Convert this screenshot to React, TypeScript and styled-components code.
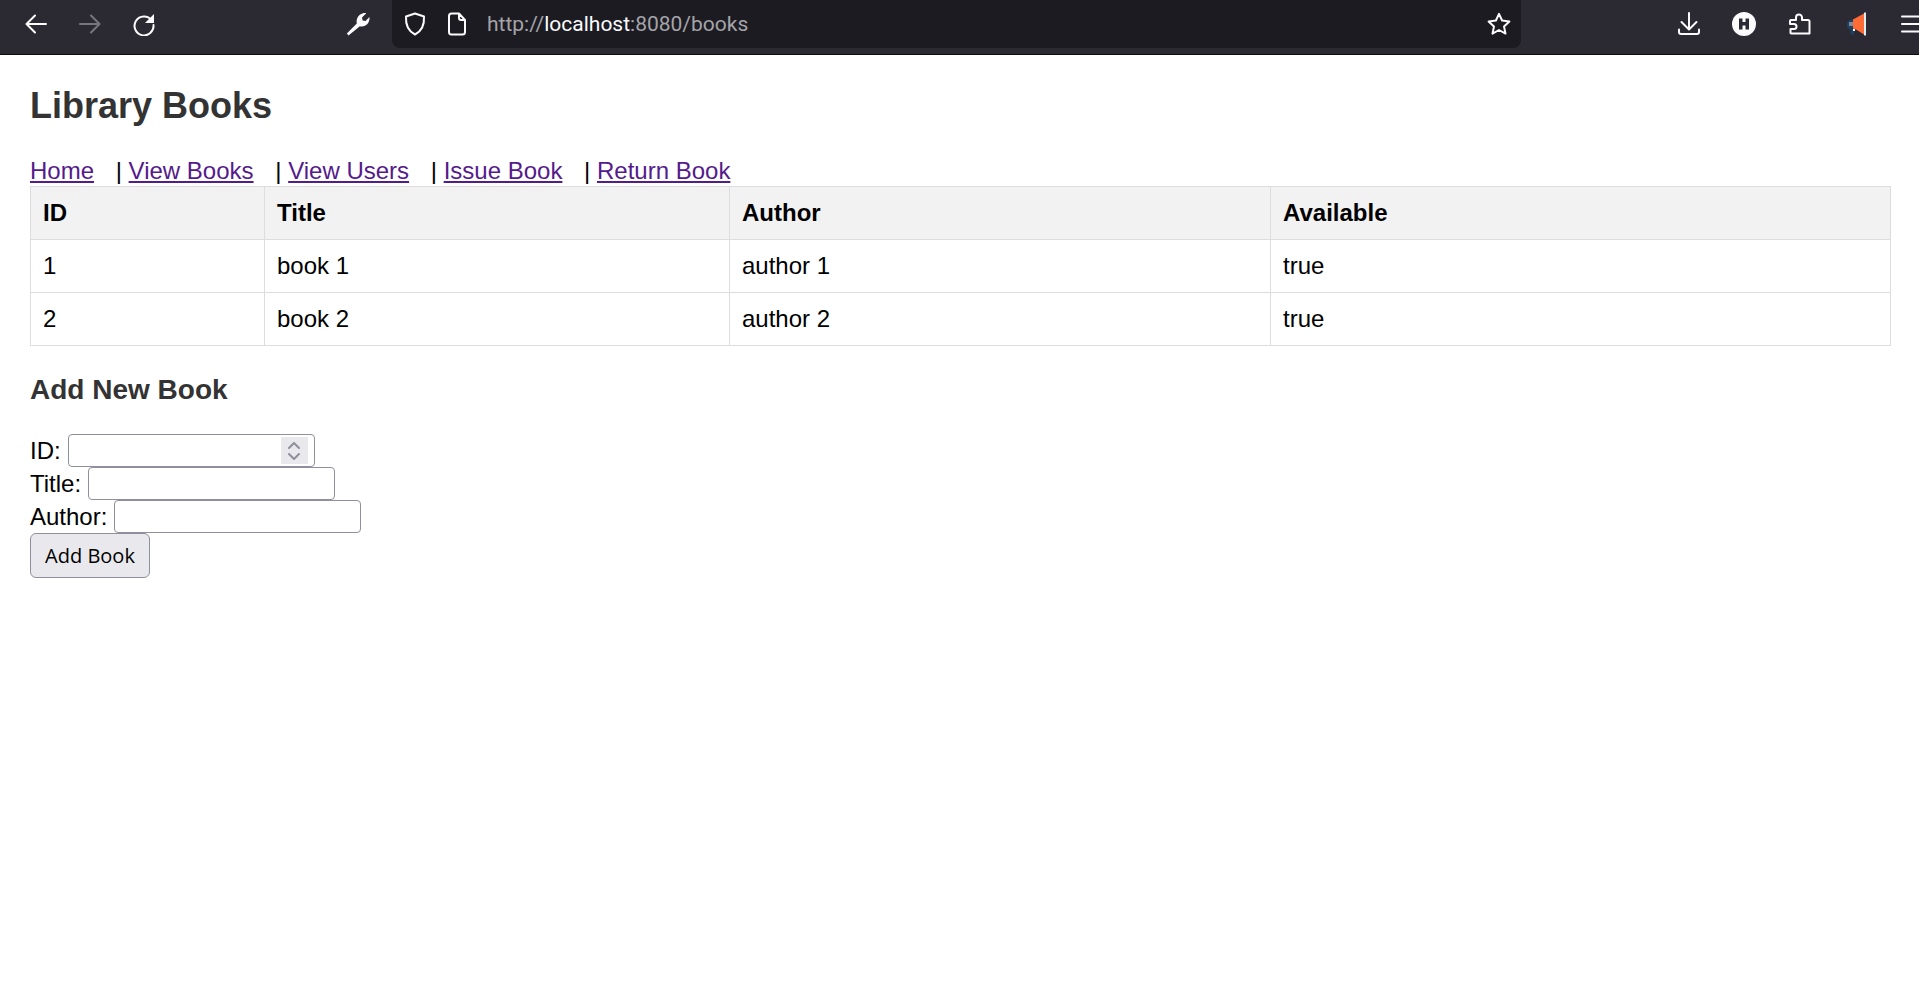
import React from 'react';
import styled, { createGlobalStyle } from 'styled-components';

const GlobalStyle = createGlobalStyle`
  html, body {
    margin: 0;
    padding: 0;
    background: #fff;
  }
  body {
    font-family: "Liberation Sans", Arial, sans-serif;
    font-size: 24px;
    color: #000;
  }
`;

const Toolbar = styled.header`
  display: flex;
  align-items: flex-start;
  height: 54px;
  padding-left: 9px;
  background: #2b2a33;
  border-bottom: 1px solid #0c0c0d;
`;
const ToolButton = styled.div<{ $dim?: boolean }>`
  display: flex;
  align-items: center;
  justify-content: center;
  flex: none;
  width: 54px;
  height: 48px;
  color: ${({ $dim }) => ($dim ? '#77767d' : '#fbfbfe')};
`;
const Spacer = styled.div`
  flex: none;
  width: 160px;
`;
const UrlBar = styled.div`
  display: flex;
  align-items: center;
  flex: none;
  width: 1129px;
  height: 48px;
  margin-left: 7px;
  padding: 0 10px 0 11px;
  box-sizing: border-box;
  background: #1c1b22;
  border-radius: 0 0 8px 8px;
  color: #fbfbfe;
`;
const UrlIcon = styled.div`
  display: flex;
  flex: none;
  width: 24px;
  margin-right: 18px;
`;
const UrlText = styled.div`
  flex: 1;
  font-family: Roboto, "Liberation Sans", sans-serif;
  font-size: 21px;
  color: #a5a4a9;
  white-space: nowrap;
  span {
    color: #fbfbfe;
  }
`;
const RightTools = styled.div`
  display: flex;
  margin-left: 140px;
`;
const ToolSlot = styled(ToolButton)`
  width: 55.5px;
`;

const Main = styled.main`
  padding: 30px;
`;
const Heading = styled.h2`
  margin: 0 0 30px;
  font-size: 36px;
  line-height: 41px;
  font-weight: bold;
  color: #333;
`;
const SubHeading = styled.h3`
  margin: 28px 0;
  font-size: 28px;
  line-height: 32px;
  font-weight: bold;
  color: #333;
`;
const Nav = styled.nav`
  height: 30px;
  line-height: 30px;
  white-space: pre;
`;
const NavLink = styled.a`
  margin-right: 15px;
  color: #551a8b;
  text-decoration: underline;
`;
const Table = styled.table`
  width: 100%;
  table-layout: fixed;
  border-collapse: collapse;
  font-size: 24px;
`;
const Th = styled.th`
  height: 53px;
  padding: 0 12px;
  box-sizing: border-box;
  background: #f2f2f2;
  border: 1.5px solid #ddd;
  text-align: left;
  font-weight: bold;
`;
const Td = styled.td`
  height: 53px;
  padding: 0 12px;
  box-sizing: border-box;
  border: 1.5px solid #ddd;
`;
const Form = styled.form`
  display: flex;
  flex-direction: column;
  align-items: flex-start;
`;
const Field = styled.div`
  display: flex;
  align-items: center;
  gap: 7px;
  height: 33px;
`;
const Box = styled.div`
  display: flex;
  align-items: center;
  width: 247px;
  height: 33px;
  padding: 0 6px 0 3px;
  box-sizing: border-box;
  background: #fff;
  border: 1.5px solid #8f8f9d;
  border-radius: 4px;
`;
const Input = styled.input`
  flex: 1;
  min-width: 0;
  padding: 0;
  border: 0;
  outline: 0;
  background: transparent;
  font: inherit;
`;
const Spinner = styled.div`
  display: flex;
  flex: none;
  align-items: center;
  justify-content: center;
  width: 27px;
  height: 27px;
  background: #e9e9ed;
`;
const Button = styled.button`
  width: 120px;
  height: 45px;
  padding: 0;
  background: #e9e9ed;
  border: 1.5px solid #8f8f9d;
  border-radius: 6px;
  color: #000;
  font-family: "Open Sans", "Liberation Sans", sans-serif;
  font-size: 20px;
`;

const stroke = {
  fill: 'none',
  stroke: 'currentColor',
  strokeWidth: 2,
  strokeLinecap: 'round' as const,
  strokeLinejoin: 'round' as const,
};

const BackIcon = () => (
  <svg width='24' height='24' viewBox='0 0 24 24' {...stroke}>
    <path d='M22 12H3M11 3.5L2.5 12l8.5 8.5' />
  </svg>
);
const ForwardIcon = () => (
  <svg width='24' height='24' viewBox='0 0 24 24' {...stroke}>
    <path d='M2 12h19M13 3.5l8.5 8.5-8.5 8.5' />
  </svg>
);
const ReloadIcon = () => (
  <svg width='24' height='24' viewBox='0 0 24 24'>
    <path d='M19.5 8A9.5 9.5 0 1 0 21.5 13' {...stroke} />
    <path d='M22 2v9h-9z' fill='currentColor' />
  </svg>
);
const WrenchIcon = () => (
  <svg width='24' height='24' viewBox='0 0 24 24'>
    <path d='M2.5 23.5L.8 21.5l10-10C10 7 12 2.5 17 1.2c1.2-.3 2.3-.3 3.3 0L16 5.5l.6 3 3 .6L23.4 5c.5 3.500-1 7.500-5 9-1.500.6-3 .6-4.500.2z' fill='currentColor' />
  </svg>
);
const ShieldIcon = () => (
  <svg width='24' height='24' viewBox='0 0 24 24' {...stroke}>
    <path d='M12 1.500l9 3c.5 8.500-2 14.500-9 18-7-3.500-9.500-9.500-9-18z' />
  </svg>
);
const PageIcon = () => (
  <svg width='24' height='24' viewBox='0 0 24 24' {...stroke}>
    <path d='M4 4a2.500 2.500 0 0 1 2.500-2.500H14L20 8v12a2.500 2.500 0 0 1-2.500 2.500h-11A2.500 2.500 0 0 1 4 20zM14 1.500V6a2 2 0 0 0 2 2h4' />
  </svg>
);
const StarIcon = () => (
  <svg width='24' height='24' viewBox='0 0 24 24' {...stroke}>
    <path d='M12 1.800l3.100 6.700 7.300.9-5.400 5 1.500 7.200-6.500-3.600-6.500 3.600 1.500-7.200-5.400-5 7.300-.9z' />
  </svg>
);
const DownloadIcon = () => (
  <svg width='24' height='24' viewBox='0 0 24 24' {...stroke}>
    <path d='M12 1v16M4.500 10l7.500 7.500 7.500-7.500M2 17.500V20a2 2 0 0 0 2 2h16a2 2 0 0 0 2-2v-2.500' />
  </svg>
);
const HoneyIcon = () => (
  <svg width='24' height='24' viewBox='0 0 24 24'>
    <circle cx='12' cy='12' r='12' fill='#fbfbfe' />
    <path d='M7 6.500h3.500v3.500h3V6.500H17v11h-3.500v-4h-3v4H7z' fill='#2b2a33' />
  </svg>
);
const PuzzleIcon = () => (
  <svg width='24' height='24' viewBox='0 0 24 24' {...stroke}>
    <path d='M3 8h5V5.500a3 3 0 0 1 6 0V8h6a1.500 1.500 0 0 1 1.500 1.500v12h-18a1.500 1.500 0 0 1-1-.5v-4h3.500a2.500 2.500 0 0 0 0-5H2V9a1 1 0 0 1 1-1z' />
  </svg>
);
const MegaphoneIcon = () => (
  <svg width='24' height='24' viewBox='0 0 24 24'>
    <path d='M8 7.500h5v9l-2 1v5H7.500v-4.500A5.500 5.500 0 0 1 8 7.500z' fill='#1f3f60' />
    <rect x='6' y='10' width='4' height='4' fill='#7f8b98' />
    <path d='M10 7.500L21 1.500v21l-8-5-3-1z' fill='#ff6b35' />
    <rect x='21' y='.5' width='2' height='23' fill='#d8eef2' />
    <rect x='10' y='17' width='2' height='2' fill='#fff' />
  </svg>
);
const MenuIcon = () => (
  <svg width='24' height='24' viewBox='0 0 24 24' {...stroke}>
    <path d='M3 4.500h18M3 12h18M3 19.500h18' />
  </svg>
);
const SpinnerIcon = () => (
  <svg width='14' height='22' viewBox='0 0 14 22' fill='none' stroke='#8f8f9d' strokeWidth='2' strokeLinecap='round' strokeLinejoin='round'>
    <path d='M2 8l5-5 5 5M2 14l5 5 5-5' />
  </svg>
);

const links = ['Home', 'View Books', 'View Users', 'Issue Book', 'Return Book'];
const books = [
  { id: 1, title: 'book 1', author: 'author 1', available: 'true' },
  { id: 2, title: 'book 2', author: 'author 2', available: 'true' },
];
const columns = [
  { name: 'ID', width: 234 },
  { name: 'Title', width: 465 },
  { name: 'Author', width: 541 },
  { name: 'Available', width: 620 },
];

const App: React.FC = () => {
  return (
    <>
      <GlobalStyle />
      <Toolbar>
        <ToolButton><BackIcon /></ToolButton>
        <ToolButton $dim><ForwardIcon /></ToolButton>
        <ToolButton><ReloadIcon /></ToolButton>
        <Spacer />
        <ToolButton><WrenchIcon /></ToolButton>
        <UrlBar>
          <UrlIcon><ShieldIcon /></UrlIcon>
          <UrlIcon><PageIcon /></UrlIcon>
          <UrlText>http://<span>localhost</span>:8080/books</UrlText>
          <StarIcon />
        </UrlBar>
        <RightTools>
          <ToolSlot><DownloadIcon /></ToolSlot>
          <ToolSlot><HoneyIcon /></ToolSlot>
          <ToolSlot><PuzzleIcon /></ToolSlot>
          <ToolSlot><MegaphoneIcon /></ToolSlot>
          <ToolSlot><MenuIcon /></ToolSlot>
        </RightTools>
      </Toolbar>
      <Main>
        <Heading>Library Books</Heading>
        <Nav>
          {links.map((link, i) => (
            <React.Fragment key={link}>
              <NavLink href='#'>{link}</NavLink>
              {i < links.length - 1 ? ' | ' : ''}
            </React.Fragment>
          ))}
        </Nav>
        <Table>
          <colgroup>
            {columns.map((c) => (
              <col key={c.name} width={c.width} />
            ))}
          </colgroup>
          <thead>
            <tr>
              {columns.map((c) => (
                <Th key={c.name}>{c.name}</Th>
              ))}
            </tr>
          </thead>
          <tbody>
            {books.map((b) => (
              <tr key={b.id}>
                <Td>{b.id}</Td>
                <Td>{b.title}</Td>
                <Td>{b.author}</Td>
                <Td>{b.available}</Td>
              </tr>
            ))}
          </tbody>
        </Table>
        <SubHeading>Add New Book</SubHeading>
        <Form>
          <Field>
            ID:
            <Box>
              <Input />
              <Spinner><SpinnerIcon /></Spinner>
            </Box>
          </Field>
          <Field>
            Title:
            <Box><Input /></Box>
          </Field>
          <Field>
            Author:
            <Box><Input /></Box>
          </Field>
          <Button type='button'>Add Book</Button>
        </Form>
      </Main>
    </>
  );
};

export default App;
